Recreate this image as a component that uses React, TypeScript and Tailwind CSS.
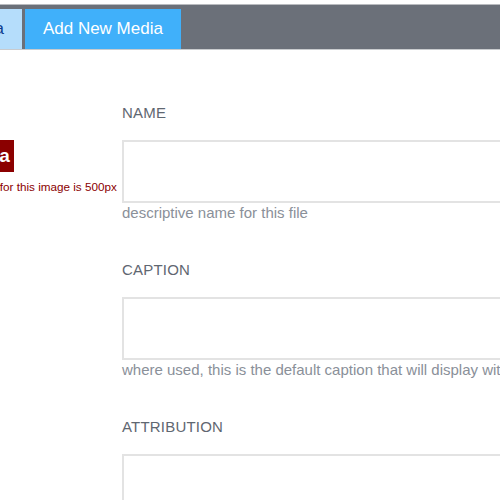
import React from "react";

type FieldProps = {
  label: string;
  hint?: string;
};

const Field: React.FC<FieldProps> = ({ label, hint }) => {
  return (
    <div className="mb-[37px]">
      <label className="block text-[15px] leading-[20px] tracking-[0.2px] text-[#5f6771] uppercase">
        {label}
      </label>
      <textarea className="block mt-[17px] w-[520px] h-[63px] border-2 border-[#e3e3e3] bg-white resize-none outline-none" />
      {hint && (
        <p className="text-[15px] leading-[20px] text-[#8a9099] whitespace-nowrap">{hint}</p>
      )}
    </div>
  );
};

export default function App() {
  return (
    <div
      className="w-[500px] h-[500px] overflow-hidden bg-white"
      style={{ fontFamily: '"Liberation Sans", Arial, sans-serif' }}
    >
      <div className="mt-[4px] h-[46px] bg-[#6b7079] border-t border-t-[#b9bbbf] border-b border-b-[#c9cbce] flex items-end">
        <div className="-ml-[84px] h-[40px] px-[18px] bg-[#b5ddfb] flex items-center text-[17px] text-[#0f3d8f] whitespace-nowrap">
          All Media
        </div>
        <div className="ml-[3px] h-[40px] px-[18px] bg-[#40b0fa] flex items-center text-[17px] text-white whitespace-nowrap">
          Add New Media
        </div>
      </div>

      <div className="flex">
        <div className="w-[122px] shrink-0 pt-[90px] whitespace-nowrap">
          <div className="-ml-[60px] inline-flex items-center h-[32px] pl-[16px] pr-[4px] bg-[#8b0000] text-white font-bold text-[19px]">
            Media
          </div>
          <p className="-ml-[56px] mt-[7px] text-[11.7px] leading-[16px] text-[#8b0000]">
            Max width for this image is 500px
          </p>
        </div>

        <div className="pt-[53px] shrink-0">
          <Field label="Name" hint="descriptive name for this file" />
          <Field
            label="Caption"
            hint="where used, this is the default caption that will display with the image"
          />
          <Field label="Attribution" />
        </div>
      </div>
    </div>
  );
}
